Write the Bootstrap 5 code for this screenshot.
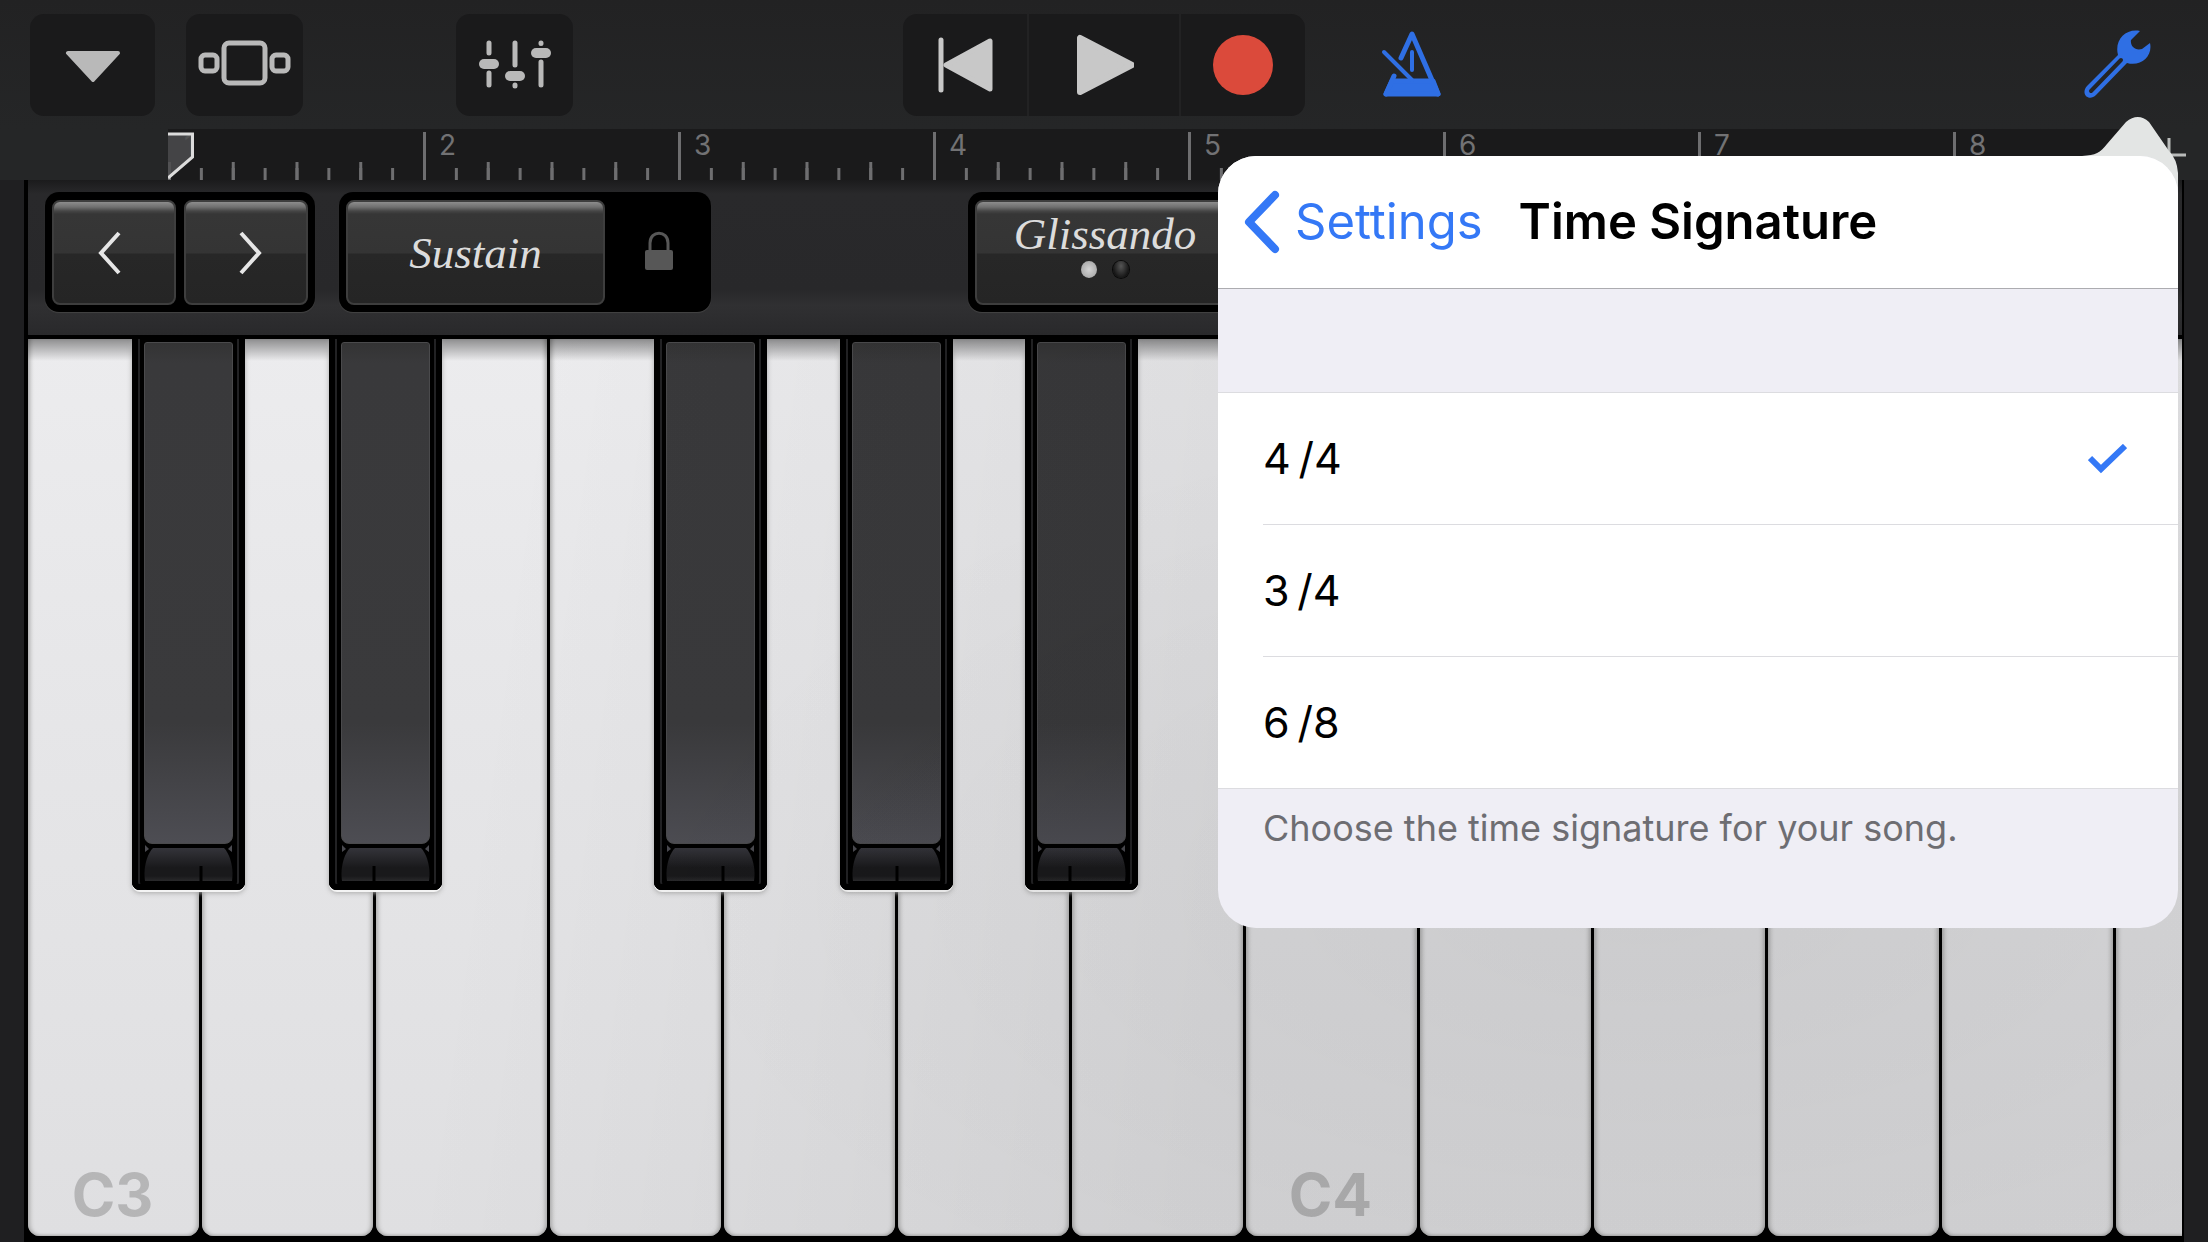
<!DOCTYPE html>
<html lang="en">
<head>
<meta charset="utf-8">
<meta name="viewport" content="width=device-width, initial-scale=1">
<title>Keyboard</title>
<link href="https://cdn.jsdelivr.net/npm/bootstrap@5.3.0/dist/css/bootstrap.min.css" rel="stylesheet">
<style>
  body { font-family: Inter, "Liberation Sans", sans-serif; background: #1f1f21; height: 100vh; overflow: hidden; }
  svg { display: block; }

  /* Transport bar */
  .topbar { background: linear-gradient(#222223, #252627); height: 129px; padding: 14px 30px 0; }
  .tool { width: 117px; height: 102px; padding: 0; border: 0; border-radius: 14px; background: #1a1a1b; color: #b9b9b9; }
  .tool-wide { width: 125px; margin-right: 31px; }
  .tool-mixer { margin-left: 153px; }
  .tool-bare { background: none; color: #2f6fe4; width: 120px; height: 102px; padding: 0; border: 0; }
  .transport .tool { width: 124px; border-radius: 0; color: #c8c8c8; }
  .transport .tool-play { width: 154px; border-left: 2px solid #222223; border-right: 2px solid #222223; }
  .transport { border-radius: 14px; overflow: hidden; }

  /* Bar ruler */
  .ruler-row { height: 51px; background: #252627; padding-left: 168px; }
  .ruler { background: #1a1a1b; padding-top: 3px; }
  .measure { flex: 0 0 255px; padding-left: 16px; color: #727274; font-size: 28px; line-height: 26px;
    background:
      linear-gradient(#6e6e70, #6e6e70) left bottom / 3px 100% no-repeat,
      linear-gradient(90deg, #6e6e70 3px, transparent 3px) left bottom / 25% 18px repeat-x,
      linear-gradient(90deg, #6e6e70 3px, transparent 3px) left bottom / 12.5% 12px repeat-x; }
  .measure-first { background:
      linear-gradient(90deg, #6e6e70 3px, transparent 3px) left bottom / 25% 18px repeat-x,
      linear-gradient(90deg, #6e6e70 3px, transparent 3px) left bottom / 12.5% 12px repeat-x; }
  .playhead { position: absolute; left: 0; bottom: 0; }
  .add-section { width: 80px; padding: 0 0 0 22px; border: 0; background: none; }

  /* Instrument body */
  .instrument { border: solid #000; border-width: 0 2px 6px 4px; margin: 0 24px; }
  .panel { height: 159px; padding: 12px 17px 0; border-bottom: 4px solid #000;
    background: linear-gradient(#1b1b1c, #29292b 14px, #28282a 110px, #303032 125px, #29292b); }
  .well { background: #000; height: 120px; border-radius: 14px; padding: 8px 7px; gap: 8px; box-shadow: 0 1px 1px #444; }
  .pad { height: 105px; border: 2px solid #3e3e3e; border-radius: 8px; padding: 0; color: #e6e6e6;
    background: linear-gradient(#8d8d8d, #707070 5px, #464646 9px, #363636 12px, #343434 51px, #272727 52px, #252525); }
  .pad-arrow { width: 124px; }
  .pad-sustain { width: 259px; }
  .pad-gliss { width: 261px; }
  .script { font: italic 45px/46px "Liberation Serif", serif; color: #dcdcdc; }
  .lock { width: 91px; border: 0; background: none; padding: 0; }
  .lamp { width: 16px; height: 17px; border-radius: 50%; }
  .lamp-on { background: radial-gradient(#d4d4d4, #9d9d9d); }
  .lamp-off { background: radial-gradient(at 50% 30%, #555, #161616 70%); box-shadow: 0 0 0 1px #0a0a0a; }

  /* Keys */
  .keybed { background: #000; gap: 3px; }
  .keybed::before { content: ""; position: absolute; inset: 0 0 auto 0; height: 22px; z-index: 1; pointer-events: none;
    background: linear-gradient(rgba(0,0,0,.4), transparent); }
  .keybed::after { content: ""; position: absolute; inset: 0; z-index: 3; pointer-events: none;
    background: radial-gradient(ellipse 1000px 500px at 75% 62%, rgba(0,0,0,.04), transparent),
      linear-gradient(98deg, transparent 22%, rgba(0,0,0,.065) 56%); }
  .slot { flex: 0 0 171px; position: relative; }
  .white-key { width: 100%; height: 100%; border: 0; border-radius: 0 0 12px 12px; padding: 0 2px 3px 0;
    background: linear-gradient(#ececee, #e5e5e7 50%, #dfdfe1);
    box-shadow: inset 5px 0 4px -3px #aaa, inset -5px 0 4px -3px #aaa, inset 0 -3px 3px -2px #aaa;
    color: rgba(0,0,0,.19); font-size: 59px; line-height: 76px; font-weight: 700; }
  .black-key { position: absolute; top: 0; z-index: 2; width: 113px; height: 551px; padding: 3px 12px 7px; border: 0;
    border-radius: 0 0 8px 8px; background: #000;
    box-shadow: inset 6px 0 0 #000, inset -6px 0 0 #000, inset 0 -6px 0 #000, inset 8px 0 0 #222224, inset -8px 0 0 #222224, 0 2px 0 #f4f4f4, 0 3px 5px #aaa; }
  .face { height: 502px; border-radius: 3px 3px 8px 8px; border: 1px solid #4a4a4c;
    background: linear-gradient(#333334, #39393b 20px, #3a3a3c 380px, #4d4d53); }
  .shift-l { left: 104px; }
  .shift-m { left: 116px; }
  .shift-r { left: 127px; }

  /* Popover */
  .sheet { position: absolute; top: 156px; right: 30px; width: 960px; max-width: calc(100vw - 60px); z-index: 10; }
  .sheet-arrow { position: absolute; right: 0; top: -39px; }
  .sheet-body { position: relative; border-radius: 38px; overflow: hidden; background: #efeef5; }
  .sheet-head { height: 133px; background: #fff; border-bottom: 1px solid #acacb0; padding: 0 24px; gap: 36px; }
  .back { color: #3478f6; font-size: 49px; gap: 15px; text-decoration: none; line-height: 60px; }
  .sheet-title { font-size: 49px; font-weight: 600; line-height: 60px; color: #000; margin: 0; }
  .choices { margin-top: 103px; background: #fff; border: solid #dcdce0; border-width: 1px 0; padding-left: 45px; }
  .choice { height: 132px; border-bottom: 1px solid #dcdce0; padding-right: 51px; font-size: 43px; color: #000; cursor: pointer; }
  .choices li:last-child .choice { border-bottom: 0; height: 131px; }
  .choice svg { visibility: hidden; }
  .choice input:checked ~ svg { visibility: visible; }
  .note { color: #6d6d72; font-size: 36px; line-height: 40px; margin: 0; padding: 19px 45px 80px; }
</style>
</head>
<body class="d-flex flex-column m-0 position-relative">

<svg width="0" height="0" class="position-absolute" aria-hidden="true">
  <defs>
    <linearGradient id="footShade" x1="0" y1="0" x2="0" y2="1"><stop offset="0" stop-color="#34343a"/><stop offset=".6" stop-color="#19191b"/><stop offset=".85" stop-color="#19191b"/><stop offset="1" stop-color="#29292b"/></linearGradient>
    <g id="foot"><path d="M9 4H80C86 10 90 24 88 37H1C-1 24 3 10 9 4Z" fill="url(#footShade)"/><path d="M1 1V8L5 5ZM88 1V8L84 5Z" fill="#4a4a50"/></g>
  </defs>
</svg>

<header class="topbar d-flex flex-shrink-0">
  <div class="d-flex flex-fill w-25">
    <button class="tool tool-wide d-flex align-items-center justify-content-center" aria-label="Browser">
      <svg width="56" height="34" viewBox="0 0 56 34"><path d="M3 5H53L28 32Z" fill="currentColor" stroke="currentColor" stroke-width="4" stroke-linejoin="round"/></svg>
    </button>
    <button class="tool d-flex align-items-center justify-content-center" aria-label="Tracks">
      <svg width="94" height="54" viewBox="0 0 94 54" fill="none" stroke="currentColor" stroke-width="5"><rect x="26" y="5" width="41" height="40" rx="5"/><rect x="3" y="17" width="16" height="16" rx="4"/><rect x="74" y="17" width="16" height="16" rx="4"/></svg>
    </button>
    <button class="tool tool-mixer d-flex align-items-center justify-content-center" aria-label="Track controls">
      <svg width="72" height="52" viewBox="0 0 72 52" fill="currentColor" stroke="currentColor" stroke-width="5" stroke-linecap="round"><path d="M10 4V14M10 34V46M36 4V26M36 46V47M62 4V4.500M62 23V46"/><g stroke="none"><rect x="0" y="20" width="20" height="10" rx="5"/><rect x="26" y="32" width="20" height="10" rx="5"/><rect x="52" y="9" width="20" height="10" rx="5"/></g></svg>
    </button>
  </div>
  <div class="transport d-flex align-self-start">
    <button class="tool d-flex align-items-center justify-content-center" aria-label="Go to beginning">
      <svg width="56" height="56" viewBox="0 0 56 56" fill="currentColor" stroke="currentColor" stroke-width="5" stroke-linejoin="round" stroke-linecap="round"><path d="M4 3V53" /><path d="M9 28L53 4V52Z"/></svg>
    </button>
    <button class="tool tool-play d-flex align-items-center justify-content-center" aria-label="Play">
      <svg width="60" height="62" viewBox="0 0 60 62" fill="currentColor" stroke="currentColor" stroke-width="6" stroke-linejoin="round"><path d="M6 4V58L58 31Z"/></svg>
    </button>
    <button class="tool d-flex align-items-center justify-content-center" aria-label="Record">
      <svg width="60" height="60" viewBox="0 0 60 60"><circle cx="30" cy="30" r="30" fill="#db4a3b"/></svg>
    </button>
  </div>
  <div class="d-flex flex-fill w-25 justify-content-between">
    <button class="tool-bare d-flex align-items-center justify-content-end ms-3" aria-label="Metronome">
      <svg width="60" height="70" viewBox="0 0 60 70" fill="none" stroke="currentColor" stroke-width="5" stroke-linejoin="round" stroke-linecap="round"><path d="M20 28L31 4L57 64"/><path d="M13 46L5 64"/><path d="M11 51H52L57 64H5Z" fill="currentColor"/><path d="M31 22V40M3 22L31 50" stroke-width="4"/></svg>
    </button>
    <button class="tool-bare d-flex align-items-center justify-content-center" aria-label="Settings">
      <svg width="68" height="70" viewBox="0 0 68 70"><path d="M56 1C42 -2 30 10 34 25L3 56C-4 64 5 72 12 65L43 33C57 37 69 26 66 13L58 19C51 21 46 16 47 10Z" fill="#2f6fe4"/><path d="M7 61L37 30" stroke="#242425" stroke-width="4" stroke-linecap="round"/></svg>
    </button>
  </div>
</header>

<div class="ruler-row d-flex flex-shrink-0">
  <div class="ruler d-flex flex-fill overflow-hidden position-relative">
    <div class="measure measure-first">1</div>
    <div class="measure">2</div>
    <div class="measure">3</div>
    <div class="measure">4</div>
    <div class="measure">5</div>
    <div class="measure">6</div>
    <div class="measure">7</div>
    <div class="measure">8</div>
    <svg class="playhead" width="27" height="48" viewBox="0 0 27 48"><path d="M0 2H24.500V25L0 46" fill="#4c4c4e" fill-opacity=".85" stroke="#dcdcdc" stroke-width="3"/></svg>
  </div>
  <button class="add-section" aria-label="Add section">
    <svg width="36" height="36" viewBox="0 0 36 36" stroke="#b9bbba" stroke-width="3"><path d="M17 1V35M0 18H34"/></svg>
  </button>
</div>

<main class="instrument d-flex flex-column flex-fill overflow-hidden">
  <div class="panel d-flex flex-shrink-0">
    <div class="d-flex flex-fill w-25 gap-4 align-items-start">
      <div class="well d-flex">
        <button class="pad pad-arrow d-flex align-items-center justify-content-center pe-2" aria-label="Octave down">
          <svg width="26" height="44" viewBox="0 0 26 44" fill="none" stroke="currentColor" stroke-width="4"><path d="M22 2L4 22L22 42"/></svg>
        </button>
        <button class="pad pad-arrow d-flex align-items-center justify-content-center ps-2" aria-label="Octave up">
          <svg width="26" height="44" viewBox="0 0 26 44" fill="none" stroke="currentColor" stroke-width="4"><path d="M4 2L22 22L4 42"/></svg>
        </button>
      </div>
      <div class="well d-flex">
        <button class="pad pad-sustain"><span class="script">Sustain</span></button>
        <button class="lock d-flex align-items-center justify-content-center" aria-label="Lock sustain">
          <svg width="28" height="42" viewBox="0 0 28 42"><rect x="0" y="19" width="28" height="20" rx="2" fill="#575757"/><path d="M5 20V12C5 -1 23 -1 23 12V20" fill="none" stroke="#575757" stroke-width="3"/></svg>
        </button>
      </div>
    </div>
    <div class="well d-flex">
      <button class="pad pad-gliss d-flex flex-column align-items-center justify-content-center pb-3">
        <span class="script">Glissando</span>
        <span class="d-flex gap-3 mt-1"><span class="lamp lamp-on"></span><span class="lamp lamp-off"></span></span>
      </button>
    </div>
    <div class="flex-fill w-25"></div>
  </div>

  <div class="keybed d-flex flex-fill position-relative overflow-hidden">
    <div class="slot"><button class="white-key d-flex align-items-end justify-content-center">C3</button><button class="black-key shift-l" aria-label="C sharp 3"><div class="face"></div>
      <svg width="89" height="39" viewBox="0 0 89 39"><use href="#foot"/><path d="M57 22V37" stroke="#000" stroke-width="3"/></svg></button></div>
    <div class="slot"><button class="white-key" aria-label="D3"></button><button class="black-key shift-r" aria-label="D sharp 3"><div class="face"></div>
      <svg width="89" height="39" viewBox="0 0 89 39"><use href="#foot"/><path d="M33 22V37" stroke="#000" stroke-width="3"/></svg></button></div>
    <div class="slot"><button class="white-key" aria-label="E3"></button></div>
    <div class="slot"><button class="white-key" aria-label="F3"></button><button class="black-key shift-l" aria-label="F sharp 3"><div class="face"></div>
      <svg width="89" height="39" viewBox="0 0 89 39"><use href="#foot"/><path d="M57 22V37" stroke="#000" stroke-width="3"/></svg></button></div>
    <div class="slot"><button class="white-key" aria-label="G3"></button><button class="black-key shift-m" aria-label="G sharp 3"><div class="face"></div>
      <svg width="89" height="39" viewBox="0 0 89 39"><use href="#foot"/><path d="M45 22V37" stroke="#000" stroke-width="3"/></svg></button></div>
    <div class="slot"><button class="white-key" aria-label="A3"></button><button class="black-key shift-r" aria-label="A sharp 3"><div class="face"></div>
      <svg width="89" height="39" viewBox="0 0 89 39"><use href="#foot"/><path d="M33 22V37" stroke="#000" stroke-width="3"/></svg></button></div>
    <div class="slot"><button class="white-key" aria-label="B3"></button></div>
    <div class="slot"><button class="white-key d-flex align-items-end justify-content-center">C4</button></div>
    <div class="slot"><button class="white-key" aria-label="D4"></button></div>
    <div class="slot"><button class="white-key" aria-label="E4"></button></div>
    <div class="slot"><button class="white-key" aria-label="F4"></button></div>
    <div class="slot"><button class="white-key" aria-label="G4"></button></div>
    <div class="slot"><button class="white-key" aria-label="A4"></button></div>
  </div>
</main>

<section class="sheet" aria-label="Time Signature">
  <svg class="sheet-arrow" width="96" height="90" viewBox="0 0 96 90"><path d="M0 39C14 38 18 36 25 27L44 5Q56 -5 67 5L87 34Q95 42 96 56V90H40V39Z" fill="#e3e5e4"/></svg>
  <div class="sheet-body">
    <div class="sheet-head d-flex align-items-center">
      <a href="#" class="back d-flex align-items-center">
        <svg width="38" height="64" viewBox="0 0 38 64" fill="none" stroke="currentColor" stroke-width="8" stroke-linecap="round" stroke-linejoin="round"><path d="M33 5L7 32L33 59"/></svg>
        Settings
      </a>
      <h1 class="sheet-title">Time Signature</h1>
    </div>
    <ul class="choices list-unstyled mb-0">
      <li><label class="choice d-flex align-items-center justify-content-between">
        <input type="radio" class="visually-hidden" name="sig" checked><span>4&#8201;/4</span>
        <svg width="39" height="30" viewBox="0 0 39 30" fill="none" stroke="#3478f6" stroke-width="6"><path d="M2 14L13 25L37 2"/></svg></label></li>
      <li><label class="choice d-flex align-items-center justify-content-between">
        <input type="radio" class="visually-hidden" name="sig"><span>3&#8201;/4</span>
        <svg width="39" height="30" viewBox="0 0 39 30" fill="none" stroke="#3478f6" stroke-width="6"><path d="M2 14L13 25L37 2"/></svg></label></li>
      <li><label class="choice d-flex align-items-center justify-content-between">
        <input type="radio" class="visually-hidden" name="sig"><span>6&#8201;/8</span>
        <svg width="39" height="30" viewBox="0 0 39 30" fill="none" stroke="#3478f6" stroke-width="6"><path d="M2 14L13 25L37 2"/></svg></label></li>
    </ul>
    <p class="note">Choose the time signature for your song.</p>
  </div>
</section>

<script src="https://cdn.jsdelivr.net/npm/bootstrap@5.3.0/dist/js/bootstrap.bundle.min.js"></script>
</body>
</html>
